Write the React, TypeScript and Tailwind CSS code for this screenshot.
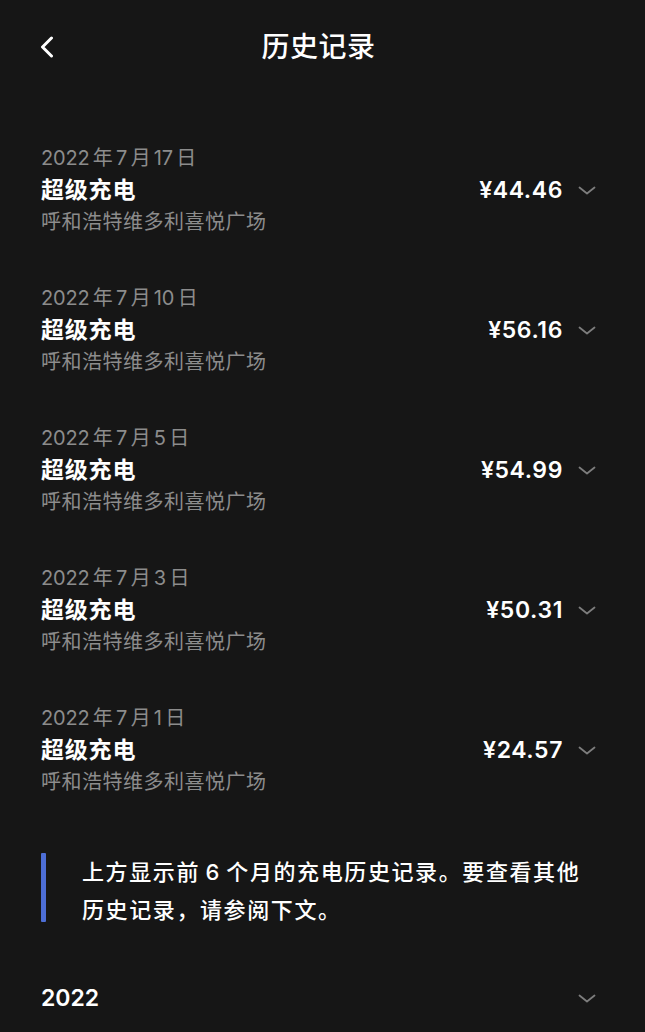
import React from "react";

const records = [
  { date: "2022\u2009年\u20097\u2009月\u200917\u2009日", price: "¥44.46" },
  { date: "2022\u2009年\u20097\u2009月\u200910\u2009日", price: "¥56.16" },
  { date: "2022\u2009年\u20097\u2009月\u20095\u2009日", price: "¥54.99" },
  { date: "2022\u2009年\u20097\u2009月\u20093\u2009日", price: "¥50.31" },
  { date: "2022\u2009年\u20097\u2009月\u20091\u2009日", price: "¥24.57" },
];

const note = "上方显示前\u20096\u2009个月的充电历史记录。要查看其他历史记录，请参阅下文。";

function ChevronDown() {
  return (
    <svg width="18" height="9" viewBox="0 0 18 9" fill="none" className="shrink-0">
      <polyline
        points="1.5,1.5 9,7.5 16.5,1.5"
        stroke="#7d7d7d"
        strokeWidth="1.8"
        strokeLinecap="round"
        strokeLinejoin="round"
      />
    </svg>
  );
}

function BackIcon() {
  return (
    <svg width="14" height="22" viewBox="0 0 14 22" fill="none">
      <polyline
        points="11.5,2 2.5,11 11.5,20"
        stroke="#ffffff"
        strokeWidth="3"
        strokeLinecap="round"
        strokeLinejoin="round"
      />
    </svg>
  );
}

export default function App() {
  return (
    <div
      className="min-h-[1032px] w-full bg-[#161616] text-white"
      style={{ fontFamily: 'Inter, "Noto Sans CJK SC", sans-serif' }}
    >
      {/* 顶部导航 */}
      <header className="grid h-[94px] grid-cols-[1fr_auto_1fr] items-center px-10">
        <div className="flex items-center">
          <BackIcon />
        </div>
        <h1 className="pr-2 text-[28px] font-medium tracking-[0.5px]">历史记录</h1>
        <div />
      </header>

      {/* 记录列表 */}
      <main className="px-[41px] pr-[49px] pt-[48px]">
        <ul className="flex flex-col gap-[44px]">
          {records.map((r) => (
            <li key={r.date} className="flex flex-col">
              <div className="text-[20px] leading-[32px] tracking-[-0.2px] text-[#8c8c8c]">
                {r.date}
              </div>
              <div className="flex h-[32px] items-center justify-between">
                <span className="text-[23px] font-semibold tracking-[0.8px]">超级充电</span>
                <div className="flex items-center gap-[15px]">
                  <span className="text-[23px] font-semibold tracking-[0.6px]">{r.price}</span>
                  <ChevronDown />
                </div>
              </div>
              <div className="text-[20px] leading-[32px] tracking-[0.5px] text-[#8c8c8c]">
                呼和浩特维多利喜悦广场
              </div>
            </li>
          ))}
        </ul>

        {/* 提示 */}
        <div className="mt-[55px] flex gap-9">
          <div className="h-[69px] w-[5px] shrink-0 rounded-[1px] bg-[#4d6ed6]" />
          <p className="text-[22px] font-medium leading-[38px] tracking-[1.6px]">{note}</p>
        </div>

        {/* 年份 */}
        <div className="mt-[53px] flex h-[32px] items-center justify-between">
          <span className="text-[23px] font-semibold">2022</span>
          <ChevronDown />
        </div>
      </main>
    </div>
  );
}
